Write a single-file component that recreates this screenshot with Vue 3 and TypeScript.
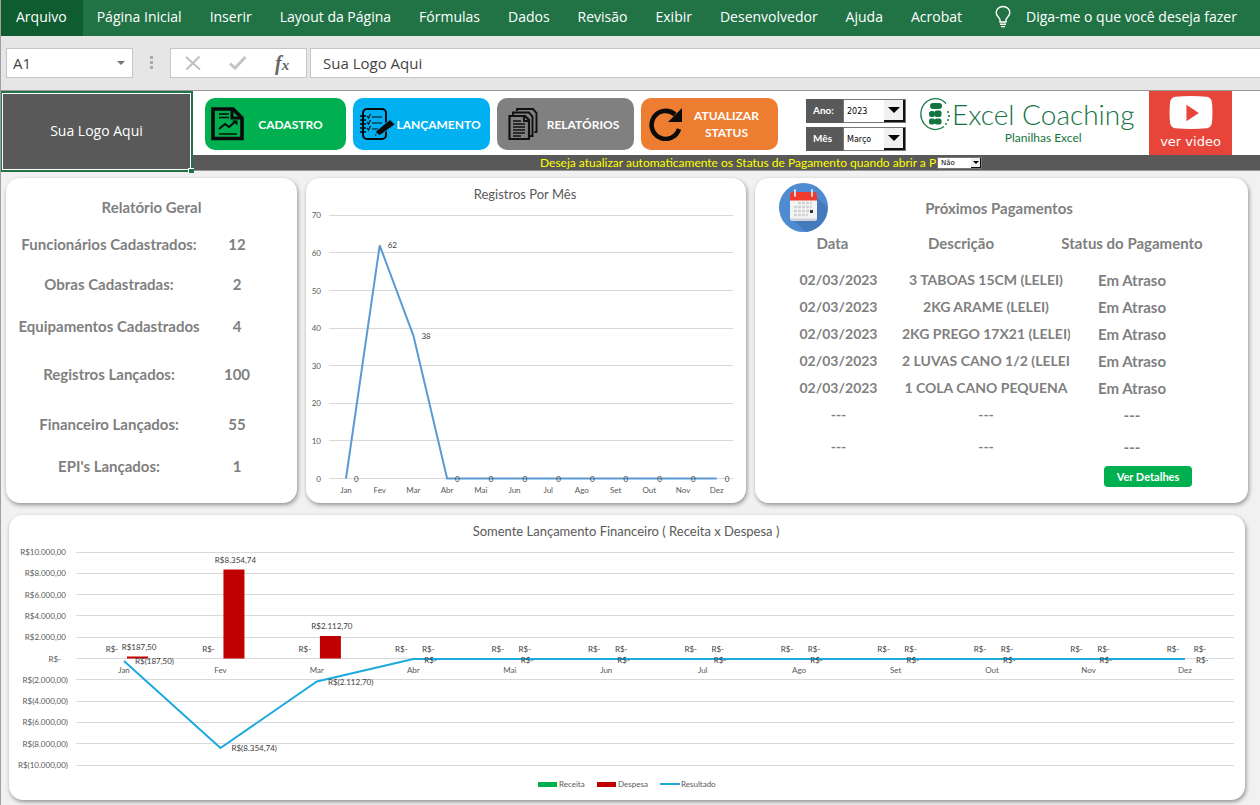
<script setup lang="ts">
import { ref } from 'vue'

const tabs: string[] = ['Arquivo', 'Página Inicial', 'Inserir', 'Layout da Página', 'Fórmulas', 'Dados', 'Revisão', 'Exibir', 'Desenvolvedor', 'Ajuda', 'Acrobat']
const months: string[] = ['Jan', 'Fev', 'Mar', 'Abr', 'Mai', 'Jun', 'Jul', 'Ago', 'Set', 'Out', 'Nov', 'Dez']

const year = ref('2023')
const month = ref('Março')
const autoUpdate = ref('Não')
const cellName = ref('A1')
const cellText = ref('Sua Logo Aqui')

const summary = [
  { label: 'Funcionários Cadastrados:', value: 12 },
  { label: 'Obras Cadastradas:', value: 2 },
  { label: 'Equipamentos Cadastrados', value: 4 },
  { label: 'Registros Lançados:', value: 100 },
  { label: 'Financeiro Lançados:', value: 55 },
  { label: "EPI's Lançados:", value: 1 },
]

const payments = [
  { date: '02/03/2023', text: '3 TABOAS 15CM (LELEI)', status: 'Em Atraso' },
  { date: '02/03/2023', text: '2KG ARAME (LELEI)', status: 'Em Atraso' },
  { date: '02/03/2023', text: '2KG PREGO 17X21 (LELEI)', status: 'Em Atraso' },
  { date: '02/03/2023', text: '2 LUVAS CANO 1/2 (LELEI)', status: 'Em Atraso' },
  { date: '02/03/2023', text: '1 COLA CANO PEQUENA', status: 'Em Atraso' },
  { date: '---', text: '---', status: '---' },
  { date: '---', text: '---', status: '---' },
]

// Records per month: plot area inside a 440 x 325 drawing
const records: number[] = [0, 62, 38, 0, 0, 0, 0, 0, 0, 0, 0, 0]
const recTicks: number[] = [70, 60, 50, 40, 30, 20, 10, 0]
const recX = (i: number): number => 40 + i * 33.7
const recY = (v: number): number => 300.5 - v * 3.76
const recPoints = records.map((v, i) => `${recX(i)},${recY(v)}`).join(' ')

// Income and expense: plot area inside a 1236 x 285 drawing
const finTicks = [
  { v: 10000, t: 'R$10.000,00' }, { v: 8000, t: 'R$8.000,00' }, { v: 6000, t: 'R$6.000,00' },
  { v: 4000, t: 'R$4.000,00' }, { v: 2000, t: 'R$2.000,00' }, { v: 0, t: 'R$-' },
  { v: -2000, t: 'R$(2.000,00)' }, { v: -4000, t: 'R$(4.000,00)' }, { v: -6000, t: 'R$(6.000,00)' },
  { v: -8000, t: 'R$(8.000,00)' }, { v: -10000, t: 'R$(10.000,00)' },
]
const expense: number[] = [187.5, 8354.74, 2112.7, 0, 0, 0, 0, 0, 0, 0, 0, 0]
const finX = (i: number): number => 115 + i * 96.45
const finY = (v: number): number => 143.5 - v * 0.01065
const finPoints = expense.map((v, i) => `${finX(i)},${finY(-v) + 0.5}`).join(' ')
const money = (v: number): string =>
  v.toFixed(2).replace('.', ',').replace(/\B(?=(\d{3})+,)/g, '.')
const expLabel = (v: number): string => (v ? `R$${money(v)}` : 'R$-')
const resLabel = (v: number): string => (v ? `R$(${money(v)})` : 'R$-')
</script>

<template>
  <div class="app">
    <nav class="ribbon" aria-label="Faixa de opções">
      <button v-for="(t, i) in tabs" :key="t" type="button" class="tab" :class="{ active: i === 0 }">{{ t }}</button>
      <button type="button" class="tell">
        <svg width="18" height="24" viewBox="0 0 18 24" fill="none" stroke="#fff" stroke-width="1.4" aria-hidden="true">
          <path d="M6 17v-2.2C6 12.500 2.200 11.500 2.200 7.800a6.800 6.300 0 0 1 13.600 0c0 3.700-3.800 4.700-3.800 7V17zM6 19.300h6M7 21.600h4" />
        </svg>
        Diga-me o que você deseja fazer
      </button>
    </nav>

    <div class="formula">
      <div class="namebox">
        <input v-model="cellName" aria-label="Caixa de nome" />
        <svg width="8" height="4" viewBox="0 0 8 4" aria-hidden="true"><path d="M0 0h8L4 4z" fill="#777" /></svg>
      </div>
      <svg class="grip" width="3" height="14" viewBox="0 0 3 14" aria-hidden="true"><path d="M0 0h3v3H0zM0 5h3v3H0zM0 10h3v3H0z" fill="#aaa" /></svg>
      <div class="fxbox">
        <button type="button" aria-label="Cancelar">
          <svg width="16" height="14" viewBox="0 0 16 14" fill="none" stroke="#bfbfbf" stroke-width="2"><path d="M1 1l14 12.500M14.500 .5L1.500 13.500" /></svg>
        </button>
        <button type="button" aria-label="Inserir">
          <svg width="18" height="14" viewBox="0 0 18 14" fill="none" stroke="#c4c4c4" stroke-width="3"><path d="M1 7.500l5 4.500L16.500 1" /></svg>
        </button>
        <button type="button" class="fx" aria-label="Inserir função"><i>f</i><i class="sub">x</i></button>
      </div>
      <input v-model="cellText" class="content" aria-label="Barra de fórmulas" />
    </div>

    <header class="top">
      <div class="cell">Sua Logo Aqui<span class="handle"></span></div>
      <div class="right">
        <div class="tools">
          <div class="actions">
            <button type="button" class="act green">
              <svg width="34" height="34" viewBox="0 0 34 34" fill="none" stroke="#0a0a0a" aria-hidden="true">
                <path d="M2 2h20l9 9v20.500H2z" stroke-width="3.600" />
                <path d="M21 2v9h10" stroke-width="3" />
                <path d="M8 7h10M8 10.500h10M8 27h18" stroke-width="1.600" />
                <path d="M8 22l6-5 4 3 7-6" stroke-width="2" />
                <path d="M21 13.500h5.500v5z" fill="#0a0a0a" stroke="none" />
              </svg>
              <span>CADASTRO</span>
            </button>
            <button type="button" class="act blue">
              <svg width="36" height="34" viewBox="0 0 36 34" fill="none" stroke="#0a0a0a" aria-hidden="true">
                <rect x="4" y="2" width="23" height="30" rx="4" stroke-width="2" />
                <path d="M1 9h6M1 13h6M1 17h6M1 21h6M1 25h6" stroke-width="1.700" />
                <path d="M13 10h10M13 16h10M13 22h6" stroke-width="1.200" />
                <path d="M8 9l1.500 2 2-4M8 15l1.500 2 2-4M8 21l1.500 2 2-4" stroke-width="1.200" />
                <path d="M31 12.500l5 5-14.500 10.500-6 2 1.500-6z" fill="#0a0a0a" stroke="#00b0f0" stroke-width="1" />
                <path d="M17.500 25l3 3.500-3.500 1z" fill="#00b0f0" stroke="none" />
              </svg>
              <span>LANÇAMENTO</span>
            </button>
            <button type="button" class="act grey">
              <svg width="30" height="34" viewBox="0 0 30 34" fill="none" stroke="#111" aria-hidden="true">
                <path d="M9 4V2h16l3.500 4v19h-2" stroke-width="1.900" />
                <path d="M5 8V5.500h16l3.500 4V29H22" stroke-width="1.900" />
                <path d="M1.500 9h15.500l4 4v19H1.500z" stroke-width="2.200" />
                <path d="M16 9v5h5" stroke-width="1.900" />
                <path d="M5 14h8M5 17h12M5 20h12M5 23h12M5 26h12M5 29h8" stroke-width="1.300" />
              </svg>
              <span>RELATÓRIOS</span>
            </button>
            <button type="button" class="act orange">
              <svg width="34" height="34" viewBox="0 0 34 34" fill="none" aria-hidden="true">
                <path d="M26 7.500A14 14 0 1 0 30 22" stroke="#0a0a0a" stroke-width="4.500" />
                <path d="M33 1v14H19z" fill="#0a0a0a" />
              </svg>
              <span>ATUALIZAR STATUS</span>
            </button>
          </div>

          <div class="filters">
            <div class="filter">
              <label for="ano">Ano:</label>
              <div class="combo">
                <select id="ano" v-model="year"><option>2022</option><option>2023</option><option>2024</option></select>
                <span class="arrow"><svg width="12" height="6" viewBox="0 0 12 6" aria-hidden="true"><path d="M0 0h12L6 6z" /></svg></span>
              </div>
            </div>
            <div class="filter">
              <label for="mes">Mês</label>
              <div class="combo">
                <select id="mes" v-model="month"><option>Fevereiro</option><option>Março</option><option>Abril</option></select>
                <span class="arrow"><svg width="12" height="6" viewBox="0 0 12 6" aria-hidden="true"><path d="M0 0h12L6 6z" /></svg></span>
              </div>
            </div>
          </div>

          <div class="brand">
            <svg width="32" height="34" viewBox="0 0 32 34" aria-hidden="true">
              <path d="M26 6.500A14.500 15.500 0 1 0 24 29.500" fill="none" stroke="#1c7a48" stroke-width="1.300" />
              <g fill="#14743f">
                <rect x="10" y="6" width="12" height="6" rx="3" />
                <rect x="9" y="14" width="6" height="6" rx="2.500" /><rect x="14.500" y="13.500" width="7" height="6.500" rx="2" />
                <rect x="9" y="21.500" width="6" height="6" rx="2" /><rect x="14.500" y="21.500" width="7" height="6" rx="2" />
                <circle cx="28" cy="15" r="1" /><circle cx="29" cy="19" r="1.100" /><circle cx="28" cy="23" r="1" /><circle cx="26" cy="27" r=".9" />
              </g>
            </svg>
            <div class="words">
              <span class="name">Excel Coaching</span>
              <span class="sub">Planilhas Excel</span>
            </div>
          </div>

          <button type="button" class="video">
            <svg width="48" height="36" viewBox="0 0 48 36" aria-hidden="true">
              <path d="M7 .8Q24-.6 41 .8Q46 1.500 46.800 6.500Q48 18 46.800 29.500Q46 34.500 41 35.200Q24 36.600 7 35.200Q2 34.500 1.200 29.500Q0 18 1.200 6.500Q2 1.500 7 .8z" fill="#fff" />
              <path d="M19 9.500v18L32.500 18.500z" fill="#e8453a" />
            </svg>
            <span>ver video</span>
          </button>
        </div>
        <div class="strip">
          <label for="auto">Deseja atualizar automaticamente os Status de Pagamento quando abrir a P</label>
          <div class="combo mini">
            <select id="auto" v-model="autoUpdate"><option>Sim</option><option>Não</option></select>
            <span class="arrow"><svg width="6" height="3" viewBox="0 0 6 3" aria-hidden="true"><path d="M0 0h6L3 3z" /></svg></span>
          </div>
        </div>
      </div>
    </header>

    <main class="board">
      <section class="card report">
        <h2>Relatório Geral</h2>
        <dl>
          <template v-for="s in summary" :key="s.label">
            <dt>{{ s.label }}</dt>
            <dd>{{ s.value }}</dd>
          </template>
        </dl>
      </section>

      <section class="card chart">
        <svg viewBox="0 0 440 325" role="img" aria-label="Registros Por Mês">
          <text class="title" x="219" y="21">Registros Por Mês</text>
          <g v-for="v in recTicks" :key="v">
            <line class="grid" x1="23" x2="427" :y1="recY(v)" :y2="recY(v)" />
            <text class="tick end" x="15" :y="recY(v) + 3">{{ v }}</text>
          </g>
          <polyline :points="recPoints" class="rec" />
          <g v-for="(m, i) in months" :key="m">
            <text class="tick mid" :x="recX(i)" y="315">{{ m }}</text>
            <text class="tick dark" :x="recX(i) + 8" :y="recY(records[i]) + 3">{{ records[i] }}</text>
          </g>
        </svg>
      </section>

      <section class="card pay">
        <div class="payhead">
          <svg width="49" height="49" viewBox="0 0 49 49" aria-hidden="true">
            <circle cx="24.500" cy="24.500" r="24.500" fill="#4f8bd0" />
            <path d="M38 14l10.500 11A24.500 24.500 0 0 1 27 49L13 36z" fill="#447abc" />
            <rect x="11" y="10" width="27" height="28" rx="3" fill="#f4f4f4" />
            <path d="M11 35.500h27a2.500 2.500 0 0 1-3 2.500H14a2.500 2.500 0 0 1-3-2.500z" fill="#cdd2d6" />
            <path d="M14 9h21q3 0 3 3v5.500H11V12q0-3 3-3z" fill="#f23a2c" />
            <path d="M16 7v6M33 7v6" stroke="#dfe6ee" stroke-width="1.800" stroke-linecap="round" />
            <path d="M19 20h14M15 24h18M15 28h18M15 32h14" stroke="#d2d2d2" stroke-width="2.600" stroke-dasharray="3 1" />
            <rect x="31" y="27" width="3" height="3" fill="#333" />
          </svg>
          <h2>Próximos Pagamentos</h2>
        </div>
        <table>
          <colgroup><col class="c1" /><col class="c2" /><col class="c3" /></colgroup>
          <thead>
            <tr><th>Data</th><th class="desc">Descrição</th><th><span>Status do Pagamento</span></th></tr>
          </thead>
          <tbody>
            <tr v-for="(p, i) in payments" :key="i"><td>{{ p.date }}</td><td>{{ p.text }}</td><td>{{ p.status }}</td></tr>
          </tbody>
        </table>
        <button type="button" class="details">Ver Detalhes</button>
      </section>

      <section class="card chart wide">
        <svg viewBox="0 0 1236 285" role="img" aria-label="Somente Lançamento Financeiro">
          <text class="title" x="617" y="21">Somente Lançamento Financeiro ( Receita x Despesa )</text>
          <g v-for="t in finTicks" :key="t.v">
            <line class="grid" x1="67" x2="1225" :y1="finY(t.v)" :y2="finY(t.v)" />
            <text class="tick end" :x="t.v < 0 ? 59 : t.v ? 57 : 52" :y="finY(t.v) + 3">{{ t.t }}</text>
          </g>
          <rect v-for="(v, i) in expense" :key="i" :x="finX(i) + 3" :y="finY(v)" width="21" :height="v * 0.01065" fill="#c00000" />
          <polyline :points="finPoints" class="res" />
          <g v-for="(m, i) in months" :key="m">
            <text class="tick mid" :x="finX(i)" y="158">{{ m }}</text>
            <text class="tick mid dark" :x="finX(i) - 12" y="137">R$-</text>
            <text class="tick mid dark" :x="finX(i) + 15" :y="finY(expense[i]) - 7">{{ expLabel(expense[i]) }}</text>
            <text class="tick dark" :x="finX(i) + 11" :y="finY(-expense[i]) + 4">{{ resLabel(expense[i]) }}</text>
          </g>
          <g>
            <rect x="529" y="267" width="19" height="5" fill="#00b050" /><text class="tick" x="550" y="272">Receita</text>
            <rect x="588" y="267" width="19" height="5" fill="#c00000" /><text class="tick" x="609" y="272">Despesa</text>
            <line x1="651" x2="671" y1="269" y2="269" stroke="#1caadd" stroke-width="2" /><text class="tick" x="672" y="272">Resultado</text>
          </g>
        </svg>
      </section>
    </main>
  </div>
</template>

<style>
body { margin: 0; background: #f1f1f1; }
</style>

<style scoped>
* { box-sizing: border-box; }
.app { min-height: 100vh; background: #f1f1f1; font-family: Lato, "Open Sans", sans-serif; color: #7f7f7f; border-left: 1px solid #a0a0a0; overflow-x: hidden; }
button, input, select { font: inherit; color: inherit; border: 0; padding: 0; margin: 0; background: none; border-radius: 0; }
button { cursor: pointer; }

.ribbon { display: flex; height: 36px; margin-left: -1px; background: #217346; color: #fff; font: 14px "Open Sans", sans-serif; white-space: nowrap; }
.tab { padding: 0 14px 3px; }
.tab.active { background: #0e5c2f; padding: 0 16px 3px; }
.tell { display: flex; align-items: center; gap: 14px; padding: 0 0 3px 18px; }

.formula { display: flex; align-items: center; height: 55px; margin-left: -1px; background: #e6e6e6; border-bottom: 1px solid #999; color: #444; font: 15px "Open Sans", sans-serif; padding-left: 6px; }
.namebox { display: flex; align-items: center; width: 127px; height: 30px; border: 1px solid #c6c6c6; background: #fff; padding: 0 7px 0 6px; }
.namebox input { flex: 1; min-width: 0; }
.grip { margin: 0 17px; }
.fxbox { display: flex; align-items: center; width: 137px; height: 30px; border: 1px solid #c6c6c6; background: #fff; padding-left: 14px; gap: 28px; }
.fxbox button { display: flex; align-items: center; }
.fx { font: bold 20px "Liberation Serif", serif; color: #666; }
.fx .sub { font-size: 15px; padding-top: 4px; }
.content { flex: 1; min-width: 0; height: 30px; margin-left: 3px; border: 1px solid #c6c6c6; border-right: 0; background: #fff; padding: 0 12px; }

.top { display: flex; height: 80px; }
.cell { position: relative; width: 192px; height: 81px; flex: none; display: flex; align-items: center; justify-content: center; background: #595959; color: #fff; font: 14px "Open Sans", sans-serif; border: 2px solid #217346; border-left-width: 1px; padding-bottom: 2px; box-shadow: inset 0 0 0 1px #fff; }
.handle { position: absolute; right: -3px; bottom: -3px; width: 6px; height: 5px; background: #217346; border-top: 1px solid #fff; border-left: 1px solid #fff; }
.right { flex: 1; min-width: 0; }
.tools { display: flex; height: 64px; background: #fff; padding-left: 12px; }
.actions { display: flex; gap: 7px; padding-top: 7px; }
.act { display: flex; align-items: center; width: 137px; height: 52px; border-radius: 10px; color: #fff; font-weight: 700; font-size: 12px; line-height: 17px; padding-left: 6px; }
.act svg { flex: none; }
.act span { flex: 1; }
.green { width: 141px; background: #00b050; padding-right: 10px; }
.blue { background: #00b0f0; padding-right: 8px; }
.grey { background: #808080; padding: 0 6px 0 11px; }
.orange { background: #ed7d31; padding: 0 8px; }
.filters { display: flex; flex-direction: column; gap: 4px; padding: 8px 0 0 28px; }
.filter { display: flex; width: 100px; height: 24px; }
.filter label { width: 37px; background: #595959; color: #fff; font-size: 10px; font-weight: 700; line-height: 23px; padding-left: 7px; }
.combo { position: relative; flex: 1; border: 1px solid #777; background: #fff; color: #000; font: 8px "DejaVu Sans", sans-serif; }
.combo select { appearance: none; width: 100%; height: 100%; padding-left: 3px; }
.arrow { position: absolute; top: 0; right: 0; bottom: 0; width: 21px; display: flex; align-items: center; justify-content: center; background: #f0f0f0; border-right: 2px solid #111; border-bottom: 2px solid #111; pointer-events: none; }
.brand { display: flex; color: #14743f; margin-left: 14px; padding-top: 6px; width: 229px; }
.words { display: flex; flex-direction: column; align-items: center; }
.name { font-size: 28px; line-height: 35px; font-weight: 300; white-space: nowrap; }
.brand .sub { font-size: 12px; line-height: 12px; }
.video { width: 83px; height: 64px; background: #e8453a; color: #fff; display: flex; flex-direction: column; align-items: center; padding-top: 5px; font: 13px "DejaVu Sans", sans-serif; line-height: 26px; }
.strip { display: flex; align-items: center; height: 16px; background: #595959; border-bottom: 1px solid #999; padding-left: 347px; }
.strip label { color: #ff0; font-size: 12px; line-height: 15px; white-space: nowrap; }
.combo.mini { flex: none; width: 45px; height: 12px; margin-left: 1px; font-size: 7px; line-height: 10px; }
.mini select { display: block; }
.mini .arrow { width: 10px; border-width: 1px; }

.board { display: grid; grid-template-columns: 291fr 440fr 493fr; column-gap: 9px; row-gap: 12px; padding: 7px 12px 5px 5px; }
.card { background: #fff; border-radius: 14px; box-shadow: 1px 2px 4px rgba(0, 0, 0, .4); }
h2 { margin: 0; font-size: 15px; line-height: 20px; font-weight: 700; text-align: center; }
.report { padding-top: 19px; }
.report dl { display: grid; grid-template-columns: 206fr 50fr 35fr; grid-template-rows: 40px 40px 44px 52px 48px 36px; align-items: center; margin: 7px 0 0; font-size: 15px; line-height: 20px; font-weight: 700; text-align: center; }
dt { grid-column: 1; white-space: nowrap; }
dd { grid-column: 2; margin: 0; }
.chart svg { display: block; width: 100%; }
.wide { grid-column: 1 / -1; margin: 0 3px; }
.title { font-size: 13px; fill: #595959; text-anchor: middle; }
.tick { font-size: 8px; fill: #595959; }
.dark { fill: #404040; }
.end { text-anchor: end; }
.mid { text-anchor: middle; }
.grid { stroke: #d9d9d9; shape-rendering: crispEdges; }
.rec { fill: none; stroke: #5b9bd5; stroke-width: 2; }
.res { fill: none; stroke: #1caadd; stroke-width: 2; }

.pay { display: flex; flex-direction: column; padding: 5px 0 14px 20px; }
.payhead { display: flex; align-items: center; padding-left: 4px; }
.payhead h2 { flex: 1; padding-right: 78px; }
table { width: 419px; max-width: 100%; table-layout: fixed; border-collapse: separate; border-spacing: 0; font-size: 14px; line-height: 18px; font-weight: 700; text-align: center; white-space: nowrap; }
.c1 { width: 127px; }
.c2 { width: 168px; }
th { height: 34px; padding: 2px 12px 0 0; font-size: 15px; vertical-align: top; }
th.desc { padding-right: 50px; }
th:last-child { padding-right: 0; }
th span { display: block; margin: 0 -12px; }
td { height: 27px; padding: 0; }
td:nth-child(2) { overflow: hidden; }
td:nth-child(3) { font-size: 15px; }
tbody tr:last-child td { height: 38px; }
.details { align-self: flex-end; margin-right: 56px; width: 88px; height: 21px; border-radius: 4px; background: #00b050; color: #fff; font-size: 11px; font-weight: 700; }
</style>
